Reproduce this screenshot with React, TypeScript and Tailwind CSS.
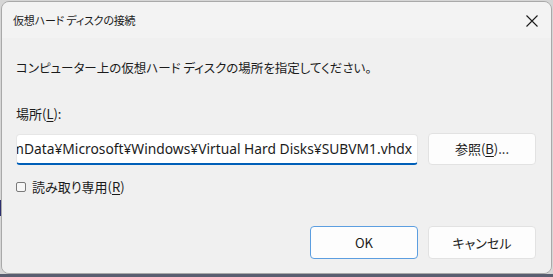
import React from "react";

const jp = { fontFamily: '"Noto Sans CJK JP", "Noto Sans", sans-serif', fontFeatureSettings: "'palt'" } as React.CSSProperties;

export default function App() {
  return (
    <div className="w-[553px] h-[277px] bg-[#d6d6d6] overflow-hidden relative" style={jp}>
      <div className="absolute left-0 right-0 bottom-0 h-[3px] bg-[#5a5e70]" />
      <div className="absolute left-0 top-[200px] w-[2px] h-[16px] bg-[#2d2f6e]" />
      <div className="absolute left-[1px] top-[1px] w-[551px] h-[273px] border border-[#a9a9a9] rounded-[8px] overflow-hidden flex flex-col text-[#1b1b1b]">
        <div className="h-[36px] bg-[#f3f3f3] flex items-center justify-between pl-[11px] pr-[13px] shrink-0">
          <span className="text-[11px] leading-[16px] tracking-[-0.2px]">仮想ハード ディスクの接続</span>
          <svg width="12" height="12" viewBox="0 0 12 12" className="mt-[1px]">
            <path d="M0.5 0.5 L11.5 11.5 M11.5 0.5 L0.5 11.5" stroke="#1b1b1b" strokeWidth="1.1" />
          </svg>
        </div>
        <div className="flex-1 bg-[#f0f0f0] pl-[14px] pr-[15px] flex flex-col">
          <div className="mt-[22px] text-[12.5px] leading-[16px]">コンピューター上の仮想ハード ディスクの場所を指定してください。</div>
          <div className="mt-[30px] text-[13px] leading-[16px]">
            場所(<span className="underline underline-offset-2">L</span>):
          </div>
          <div className="mt-[11px] flex items-center gap-[10px]">
            <div className="w-[402px] h-[31px] bg-white rounded-[4px] border border-[#e6e6e6] border-b-[2px] border-b-[#005fb8] overflow-hidden flex items-center justify-end pr-[5px]">
              <span className="whitespace-nowrap text-[13.8px] leading-[16px]" style={{ fontFamily: '"Noto Sans", sans-serif' }}>
                C:¥ProgramData¥Microsoft¥Windows¥Virtual Hard Disks¥SUBVM1.vhdx
              </span>
            </div>
            <button className="w-[108px] h-[32px] bg-[#fdfdfd] border border-[#e2e2e2] rounded-[4px] text-[13px] leading-[16px] flex items-center justify-center">
              参照(<span className="underline underline-offset-2">B</span>)...
            </button>
          </div>
          <div className="mt-[14px] flex items-center gap-[6px]">
            <div className="w-[10px] h-[10px] border border-[#7a7a7a] rounded-[2px] bg-[#f7f7f7]" />
            <span className="text-[13px] leading-[16px]">
              読み取り専用(<span className="underline underline-offset-2">R</span>)
            </span>
          </div>
          <div className="mt-[31px] flex justify-end gap-[10px]">
            <button className="w-[108px] h-[33px] bg-[#fdfdfd] border border-[#5c9ee0] rounded-[4px] text-[13px] flex items-center justify-center">
              OK
            </button>
            <button className="w-[108px] h-[33px] bg-[#fdfdfd] border border-[#e2e2e2] rounded-[4px] text-[13px] flex items-center justify-center">
              キャンセル
            </button>
          </div>
        </div>
      </div>
    </div>
  );
}
